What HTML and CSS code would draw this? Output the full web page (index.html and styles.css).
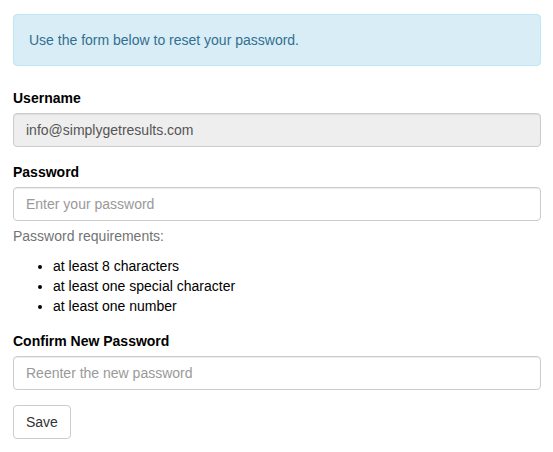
FILE: index.html
```html
<!DOCTYPE html>
<html lang="en">
<head>
<meta charset="utf-8">
<title>Reset password</title>
<link rel="stylesheet" href="styles.css">
</head>
<body>
<div class="page">
  <div class="alert">Use the form below to reset your password.</div>
  <form class="form">
    <div class="form-group">
      <label class="label">Username</label>
      <input class="control" type="text" value="info@simplygetresults.com" disabled>
    </div>
    <div class="form-group">
      <label class="label">Password</label>
      <input class="control" type="password" placeholder="Enter your password">
      <div class="help">Password requirements:</div>
      <ul class="reqs">
        <li>at least 8 characters</li>
        <li>at least one special character</li>
        <li>at least one number</li>
      </ul>
    </div>
    <div class="form-group">
      <label class="label">Confirm New Password</label>
      <input class="control" type="password" placeholder="Reenter the new password">
    </div>
    <button class="btn" type="button">Save</button>
  </form>
</div>
</body>
</html>
```

FILE: styles.css
```css
* { box-sizing: border-box; }
html, body { margin: 0; padding: 0; background: #fff; }
body {
  font-family: "Liberation Sans", Arial, sans-serif;
  font-size: 14px;
  line-height: 20px;
  color: #111;
}
.page { padding: 14px 12px 0 13px; }
.alert {
  background: #d9edf7;
  border: 1px solid #bce8f1;
  border-radius: 4px;
  color: #31708f;
  padding: 15px 15px;
  margin-bottom: 22px;
}
.form-group { margin-bottom: 15px; }
.label {
  display: block;
  font-weight: bold;
  margin-bottom: 5px;
  color: #000;
}
.control {
  display: block;
  width: 100%;
  height: 34px;
  padding: 6px 12px;
  font-family: inherit;
  font-size: 14px;
  line-height: 20px;
  color: #555;
  background: #fff;
  border: 1px solid #ccc;
  border-radius: 4px;
  box-shadow: inset 0 1px 1px rgba(0,0,0,.075);
  margin: 0;
}
.control::placeholder { color: #999; opacity: 1; }
.control:disabled { background: #eee; color: #555; -webkit-text-fill-color: #555; opacity: 1; }
.help {
  margin-top: 5px;
  margin-bottom: 10px;
  color: #737373;
}
.reqs {
  margin: 0 0 10px;
  padding-left: 40px;
  color: #000;
}
.btn {
  display: inline-block;
  height: 34px;
  padding: 6px 12px;
  font-family: inherit;
  font-size: 14px;
  line-height: 20px;
  color: #333;
  background: #fff;
  border: 1px solid #ccc;
  border-radius: 4px;
  cursor: pointer;
}
```
